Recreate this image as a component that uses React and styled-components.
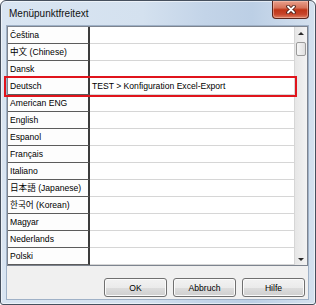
import styled, { createGlobalStyle } from "styled-components";

const GlobalStyle = createGlobalStyle`
  html, body {
    margin: 0;
    padding: 0;
    background: #ffffff;
  }
  * {
    box-sizing: border-box;
  }
`;

const languages = [
  { name: "Čeština" },
  { name: "中文 (Chinese)" },
  { name: "Dansk" },
  { name: "Deutsch", text: "TEST > Konfiguration Excel-Export", marked: true },
  { name: "American ENG" },
  { name: "English" },
  { name: "Espanol" },
  { name: "Français" },
  { name: "Italiano" },
  { name: "日本語 (Japanese)" },
  { name: "한국어 (Korean)" },
  { name: "Magyar" },
  { name: "Nederlands" },
  { name: "Polski" },
];

function CloseGlyph() {
  return (
    <svg width="10" height="9" viewBox="0 0 10 9">
      <path d="M2 1.5 L8 7.5 M8 1.5 L2 7.5" stroke="#4b1d15" strokeWidth="3.6" strokeLinecap="round" />
      <path d="M2 1.5 L8 7.5 M8 1.5 L2 7.5" stroke="#ffffff" strokeWidth="1.8" strokeLinecap="round" />
    </svg>
  );
}

export default function App() {
  return (
    <>
      <GlobalStyle />
      <Window>
        <TitleBar>
          <Title>Menüpunktfreitext</Title>
          <CloseButton>
            <CloseGlyph />
          </CloseButton>
        </TitleBar>
        <Client>
          <Grid>
            <Table>
              {languages.map((lang) => (
                <Row key={lang.name} $marked={lang.marked}>
                  <LangCell>{lang.name}</LangCell>
                  <ValueCell>{lang.text}</ValueCell>
                </Row>
              ))}
            </Table>
            <ScrollBar>
              <ArrowBox>
                <UpArrow />
              </ArrowBox>
              <Thumb />
              <Track />
              <ArrowBox>
                <DownArrow />
              </ArrowBox>
            </ScrollBar>
          </Grid>
          <ButtonRow>
            <Button>OK</Button>
            <Button>Abbruch</Button>
            <Button>Hilfe</Button>
          </ButtonRow>
        </Client>
      </Window>
    </>
  );
}

const Window = styled.div`
  width: 316px;
  height: 305px;
  display: flex;
  flex-direction: column;
  padding: 0 6px 4px 5px;
  border: 1px solid #46505e;
  border-radius: 6px 6px 3px 3px;
  background: linear-gradient(
    90deg,
    #d9e5f2 0%,
    #d4e1ef 45%,
    #c3d4e8 65%,
    #bccfe5 80%,
    #cbdaeb 92%,
    #d4e1ee 100%
  );
  box-shadow: inset 0 0 0 1px rgba(255, 255, 255, 0.55);
  font-family: "Liberation Sans", "Noto Sans CJK JP", "Noto Sans CJK KR", sans-serif;
  color: #000;
`;

const TitleBar = styled.div`
  height: 24px;
  display: flex;
  justify-content: space-between;
  align-items: flex-start;
`;

const Title = styled.div`
  font-size: 10px;
  line-height: 12px;
  padding: 7px 0 0 3px;
  color: #111;
`;

const CloseButton = styled.div`
  width: 37px;
  height: 18px;
  display: flex;
  align-items: center;
  justify-content: center;
  border: 1px solid #5a251b;
  border-top: none;
  border-radius: 0 0 4px 4px;
  background: linear-gradient(
    #e9a08c 0%,
    #d6735a 40%,
    #bf3517 52%,
    #c7452a 78%,
    #dd7f62 100%
  );
  box-shadow: inset 0 0 0 1px rgba(255, 210, 195, 0.45);
`;

const Client = styled.div`
  flex: 1;
  display: flex;
  flex-direction: column;
  background: #f0f0f0;
  border: 1px solid #9fb1c7;
`;

const Grid = styled.div`
  display: flex;
  border: 1px solid #7d848f;
  background: #ffffff;
`;

const Table = styled.div`
  flex: 1;
  display: flex;
  flex-direction: column;
`;

const Row = styled.div`
  position: relative;
  display: flex;
  height: 17px;

  &::after {
    content: "";
    display: ${(p) => (p.$marked ? "block" : "none")};
    position: absolute;
    top: -2px;
    bottom: -2px;
    left: -4px;
    right: -2px;
    border: 2px solid #e0141c;
    z-index: 1;
    pointer-events: none;
  }
`;

const LangCell = styled.div`
  width: 82px;
  padding-left: 2px;
  font-size: 8.6px;
  line-height: 16px;
  white-space: nowrap;
  border-right: 2px solid #3c3c3c;
  border-bottom: 1px solid #5c5c5c;
  background: #fdfdfd;
`;

const ValueCell = styled.div`
  flex: 1;
  padding-left: 2px;
  font-size: 8.6px;
  line-height: 16px;
  white-space: nowrap;
  border-right: 1px solid #d6d6d6;
  border-bottom: 1px solid #d6d6d6;
`;

const ScrollBar = styled.div`
  width: 12px;
  display: flex;
  flex-direction: column;
  background: linear-gradient(90deg, #e6e6e6, #f3f3f3);
`;

const ArrowBox = styled.div`
  height: 12px;
  display: flex;
  align-items: center;
  justify-content: center;
`;

const UpArrow = styled.div`
  width: 0;
  height: 0;
  border-left: 3px solid transparent;
  border-right: 3px solid transparent;
  border-bottom: 3px solid #2a2a2a;
`;

const DownArrow = styled.div`
  width: 0;
  height: 0;
  border-left: 3px solid transparent;
  border-right: 3px solid transparent;
  border-top: 3px solid #2a2a2a;
`;

const Thumb = styled.div`
  height: 14px;
  margin: 3px 1px 0 1px;
  border: 1px solid #9a9a9a;
  border-radius: 2px;
  background: linear-gradient(90deg, #f6f6f6, #e0e0e0);
`;

const Track = styled.div`
  flex: 1;
`;

const ButtonRow = styled.div`
  flex: 1;
  display: flex;
  justify-content: flex-end;
  align-items: flex-start;
  gap: 6px;
  padding: 12px 3px 0 0;
`;

const Button = styled.div`
  width: 63px;
  height: 19px;
  display: flex;
  align-items: center;
  justify-content: center;
  font-size: 8.6px;
  border: 1px solid #707070;
  border-radius: 3px;
  background: linear-gradient(#f2f2f2 0%, #ebebeb 50%, #dddddd 51%, #cfcfcf 100%);
  box-shadow: inset 0 0 0 1px #fbfbfb;
`;
